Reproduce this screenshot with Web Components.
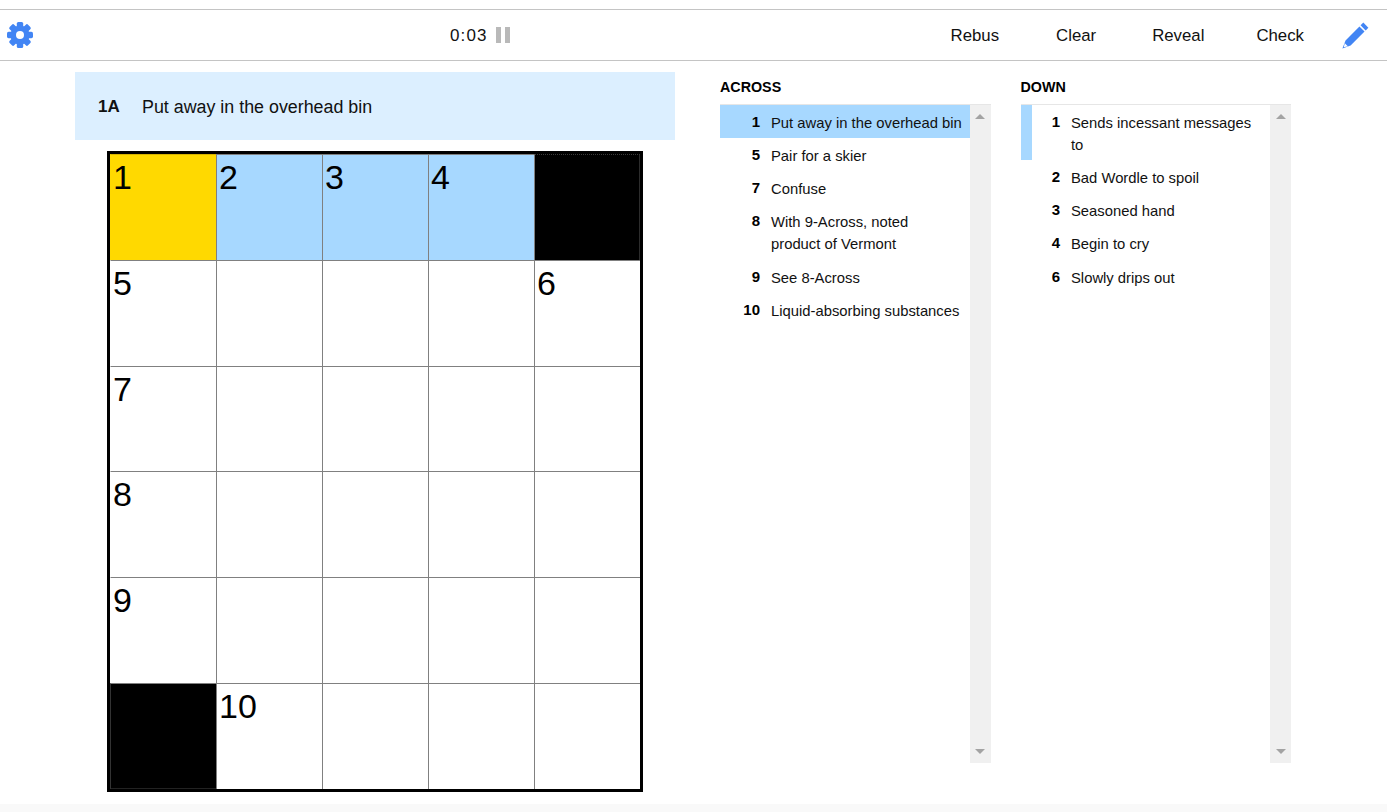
<!DOCTYPE html>
<html lang="en">
<head>
<meta charset="utf-8">
<title>Crossword</title>
<style>
  html, body { margin: 0; height: 100%; background: #fff; }
  body { font-family: "Liberation Sans", Arial, sans-serif; color: #111; overflow: hidden; }
</style>
</head>
<body>
<xw-app>
  <xw-toolbar slot="toolbar" time="0:03"></xw-toolbar>
  <xw-clue-bar slot="bar" label="1A">Put away in the overhead bin</xw-clue-bar>
  <xw-board slot="board"></xw-board>
  <xw-list slot="across" heading="ACROSS">
    <xw-clue num="1" state="active">Put away in the overhead bin</xw-clue>
    <xw-clue num="5">Pair for a skier</xw-clue>
    <xw-clue num="7">Confuse</xw-clue>
    <xw-clue num="8" style="--pb:5px">With 9-Across, noted<br>product of Vermont</xw-clue>
    <xw-clue num="9">See 8-Across</xw-clue>
    <xw-clue num="10">Liquid-absorbing substances</xw-clue>
  </xw-list>
  <xw-list slot="down" heading="DOWN" style="--num-w:28.5px">
    <xw-clue num="1" state="cross">Sends incessant messages<br>to</xw-clue>
    <xw-clue num="2">Bad Wordle to spoil</xw-clue>
    <xw-clue num="3">Seasoned hand</xw-clue>
    <xw-clue num="4" style="--pb:5px">Begin to cry</xw-clue>
    <xw-clue num="6">Slowly drips out</xw-clue>
  </xw-list>
</xw-app>

<script>
class XwApp extends HTMLElement {
  constructor() {
    super();
    this.attachShadow({ mode: 'open' });
    this.shadowRoot.innerHTML = `
      <style>
        :host { display: flex; flex-direction: column; height: 812px; }
        .top { padding-top: 9px; }
        main { flex: 1; display: flex; padding-left: 75px; }
        .left { width: 600px; padding-top: 11px; }
        .board { padding: 11px 0 0 32px; }
        .right { display: flex; margin-left: 45px; padding-top: 16px; column-gap: 30px; }
        footer { height: 8px; background: #f9f9f9; }
      </style>
      <div class="top"><slot name="toolbar"></slot></div>
      <main>
        <div class="left">
          <slot name="bar"></slot>
          <div class="board"><slot name="board"></slot></div>
        </div>
        <div class="right">
          <slot name="across"></slot>
          <slot name="down"></slot>
        </div>
      </main>
      <footer></footer>
    `;
  }
}

class XwToolbar extends HTMLElement {
  constructor() {
    super();
    this.attachShadow({ mode: 'open' });
    const time = this.getAttribute('time');
    const teeth = [0, 45, 90, 135, 180, 225, 270, 315]
      .map(a => `<rect x="9.8" y="0" width="6.4" height="8" rx="1.6" transform="rotate(${a} 13 13)"/>`)
      .join('');
    this.shadowRoot.innerHTML = `
      <style>
        :host { display: block; font-size: 16.8px; }
        .bar {
          display: grid; grid-template-columns: 450px auto 1fr; align-items: center;
          height: 50px;
          border-top: 1px solid #c4c4c4; border-bottom: 1px solid #c4c4c4;
        }
        .gear { display: block; margin-left: 7px; }
        .timer { display: flex; align-items: center; column-gap: 8.5px; font-size: 17px; letter-spacing: 1.1px; }
        .timer > span:first-child { padding-top: 1px; }
        .pause { display: flex; column-gap: 4px; }
        .pause i { width: 5px; height: 16px; background: #b9b9b9; }
        .tools { display: flex; justify-content: flex-end; align-items: center; }
        .tools span { display: block; padding-top: 1px; }
        .pencil { display: block; margin: 0 18px 0 38px; }
      </style>
      <div class="bar">
        <div>
          <svg class="gear" width="26" height="26" viewBox="0 0 26 26" fill="#4285f4">
            ${teeth}
            <circle cx="13" cy="13" r="9.6"/>
            <circle cx="13" cy="13" r="4" fill="#fff"/>
          </svg>
        </div>
        <div class="timer"><span>${time}</span><span class="pause"><i></i><i></i></span></div>
        <div class="tools">
          <span style="margin-right:57px">Rebus</span>
          <span style="margin-right:56px">Clear</span>
          <span style="margin-right:52px">Reveal</span>
          <span>Check</span>
          <svg class="pencil" width="27" height="27" viewBox="0 0 26 26" fill="#4285f4">
            <path d="M20.500.600l4.900 4.900-2.600 2.600-4.900-4.900z"/>
            <path fill-rule="evenodd" d="M16.800 4.300l4.900 4.900L8.300 22.600 .4 25.600l3-7.900zM2.700 20.400l-1 3.900 3.900-1z"/>
          </svg>
        </div>
      </div>
    `;
  }
}

class XwClueBar extends HTMLElement {
  constructor() {
    super();
    this.attachShadow({ mode: 'open' });
    const label = this.getAttribute('label');
    this.shadowRoot.innerHTML = `
      <style>
        :host { display: block; }
        .bar {
          display: flex; align-items: center; box-sizing: border-box; height: 68px; padding-top: 2px;
          background: #dcefff; font-size: 17.85px;
        }
        b { width: 44px; margin-left: 23px; font-size: 17px; }
      </style>
      <div class="bar"><b>${label}</b><span><slot></slot></span></div>
    `;
  }
}

class XwBoard extends HTMLElement {
  constructor() {
    super();
    this.attachShadow({ mode: 'open' });
    // # = black square, digits = clue number, '*' = selected word, '@' = selected cell
    const cells = [
      ['@1', '*2', '*3', '*4', '#'],
      ['5', '', '', '', '6'],
      ['7', '', '', '', ''],
      ['8', '', '', '', ''],
      ['9', '', '', '', ''],
      ['#', '10', '', '', ''],
    ];
    const html = cells.flat().map((c) => {
      const cls = [];
      if (c[0] === '#') cls.push('black');
      if (c[0] === '@') cls.push('sel');
      if (c[0] === '*') cls.push('word');
      const n = c.replace(/[#@*]/, '');
      return `<div class="${cls.join(' ')}">${n}</div>`;
    }).join('');
    this.shadowRoot.innerHTML = `
      <style>
        :host { display: block; width: 536px; }
        .grid {
          display: grid; grid-template-columns: repeat(5, 106px); grid-template-rows: 106px 106px 105px 106px 106px 106px;
          width: 530px; height: 635px; border: 3px solid #000; color: #000;
        }
        .grid div {
          box-sizing: border-box; border-left: 1px solid #808080; border-top: 1px solid #808080;
          font-size: 34px; line-height: 40px; padding: 2px 0 0 2px;
        }
        .grid div:nth-child(5n+1) { border-left-color: transparent; }
        .sel { background: #ffd900; }
        .grid div.sel { border-top-color: #d8b400; }
        .word { background: #a7d8ff; }
        .grid div.black { background: #000; }
        .grid div.black:nth-child(5) { border-top: 1px dotted #3a3a3a; box-shadow: inset -1px 0 0 #2c2c2c; }
        .grid div.black:nth-child(26) { border-left-color: #333; box-shadow: inset 0 -1px 0 #222; }
      </style>
      <div class="grid">${html}</div>
    `;
  }
}

class XwList extends HTMLElement {
  constructor() {
    super();
    this.attachShadow({ mode: 'open' });
    this.shadowRoot.innerHTML = `
      <style>
        :host { display: block; width: 270.5px; }
        h3 { margin: 0; height: 27px; font-size: 14.3px; line-height: 20px; font-weight: 700; color: #000; }
        .box { display: flex; height: 659px; border-top: 1px solid #e6e6e6; box-sizing: border-box; }
        .rows { flex: 1; }
        .sb {
          width: 21px; background: #f0f0f0;
          display: flex; flex-direction: column; justify-content: space-between; align-items: center;
          padding: 9px 0;
        }
        .up, .dn { width: 0; height: 0; border-left: 5px solid transparent; border-right: 5px solid transparent; }
        .up { border-bottom: 5px solid #a3a3a3; }
        .dn { border-top: 5px solid #a3a3a3; }
      </style>
      <h3>${this.getAttribute('heading')}</h3>
      <div class="box">
        <div class="rows"><slot></slot></div>
        <div class="sb"><i class="up"></i><i class="dn"></i></div>
      </div>
    `;
  }
}

class XwClue extends HTMLElement {
  constructor() {
    super();
    this.attachShadow({ mode: 'open' });
    this.shadowRoot.innerHTML = `
      <style>
        :host { display: block; font-size: 14.8px; line-height: 22px; }
        .row { display: flex; padding: 7px 0 var(--pb, 4px); border-left: 11px solid transparent; }
        :host([state="active"]) .row { background: #a7d8ff; border-left-color: #a7d8ff; }
        :host([state="cross"]) .row { border-left-color: #a7d8ff; }
        b { width: var(--num-w, 29px); text-align: right; margin: -1px 11px 0 0; flex: none; font-size: 15px; color: #000; }
      </style>
      <div class="row"><b>${this.getAttribute('num')}</b><span><slot></slot></span></div>
    `;
  }
}

customElements.define('xw-app', XwApp);
customElements.define('xw-toolbar', XwToolbar);
customElements.define('xw-clue-bar', XwClueBar);
customElements.define('xw-board', XwBoard);
customElements.define('xw-list', XwList);
customElements.define('xw-clue', XwClue);
</script>
</body>
</html>
